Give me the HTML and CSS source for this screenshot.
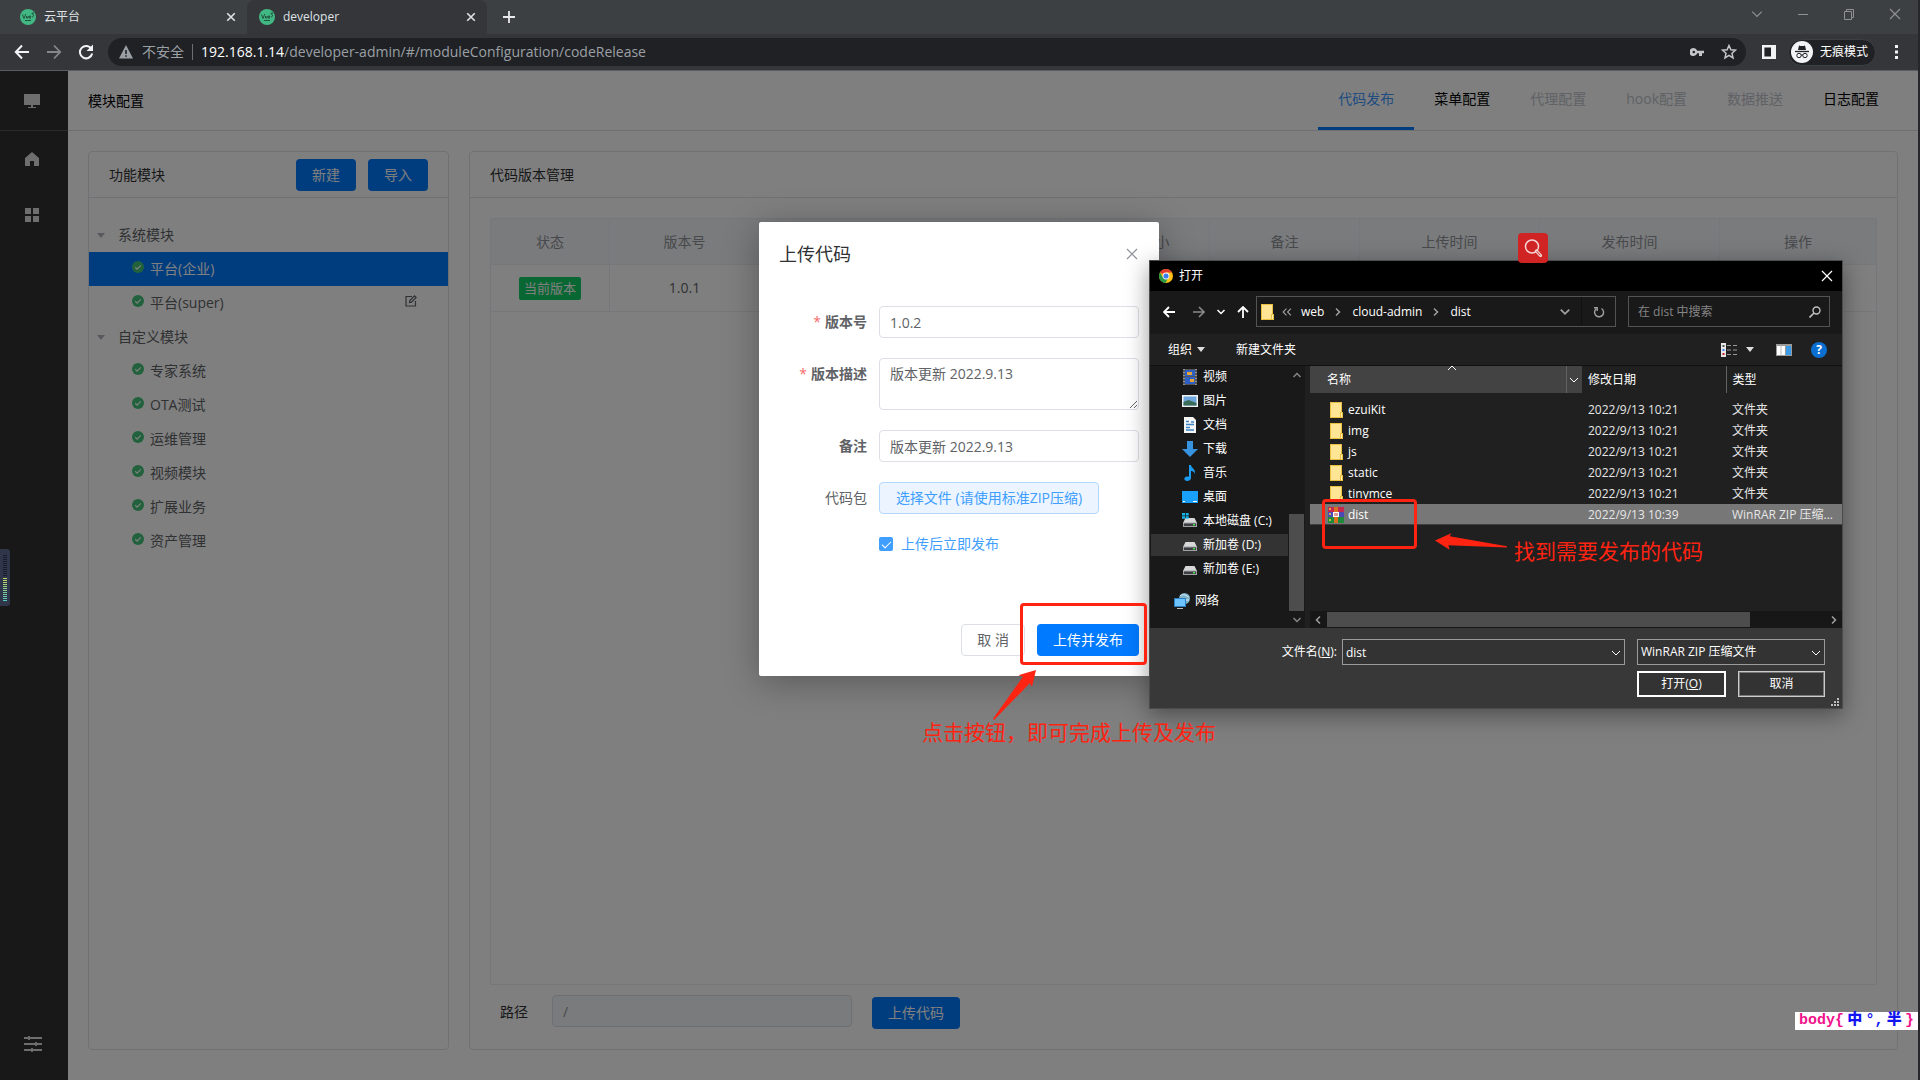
FILE: index.html
```html
<!DOCTYPE html>
<html lang="zh-CN">
<head>
<meta charset="utf-8">
<title>developer</title>
<link rel="stylesheet" href="styles.css">
</head>
<body>
<svg class="defs" aria-hidden="true">
  <symbol id="ok" viewBox="0 0 12 12"><circle cx="6" cy="6" r="6" fill="#42c47a"/><path d="M3.2 6.2l2 1.9 3.6-3.8" fill="none" stroke="#fff" stroke-width="1.2"/></symbol>
  <symbol id="folder" viewBox="0 0 13 16"><path d="M0 0h12v10h1v6H0z" fill="#e9c03f"/><path d="M1 1h10v9h-1v5H1z" fill="#ffe594"/><path d="M11 11h1v4h-1z" fill="#fff0b8"/></symbol>
  <symbol id="vue" viewBox="0 0 16 16"><circle cx="8" cy="8" r="8" fill="#41b883"/><path d="M2.500 5.500l1.500 4 1.800-4.500M6.500 7v2h1.500V7M9 8h2c0-1.600-2-1.600-2 0s1 1.500 2 1M11.500 4.500l2-.8-.8 2c1.500 0 1 2.500-.7 2.200M5 11.500h6" fill="none" stroke="#1f4a38" stroke-width=".9"/></symbol>
  <symbol id="disk" viewBox="0 0 16 16"><path d="M3.500 5h9L15 10H1z" fill="#d6d8da"/><path d="M1 9.500h14V14H1z" fill="#9fa2a5"/><path d="M2 10.500h12V13H2z" fill="#3b3d40"/><path d="M11 11h2v1.500h-2z" fill="#4be04b"/></symbol>
  <symbol id="chev" viewBox="0 0 10 10"><path d="M1.500 3L5 6.500 8.500 3" fill="none" stroke="currentColor" stroke-width="1.500"/></symbol>
  <symbol id="thin" viewBox="0 0 10 10"><path d="M1 3l4 4 4-4" fill="none" stroke="currentColor"/></symbol>
  <symbol id="x" viewBox="0 0 12 12"><path d="M1 1l10 10M11 1L1 11" fill="none" stroke="currentColor" stroke-width="1.200"/></symbol>
  <symbol id="xb" viewBox="0 0 12 12"><path d="M1.500 1.500l9 9M10.500 1.500l-9 9" fill="none" stroke="currentColor" stroke-width="2"/></symbol>
  <symbol id="tri" viewBox="0 0 8 5"><path d="M0 0h8L4 5z" fill="currentColor"/></symbol>
</svg>

<div class="screen">
  <header class="tabstrip">
    <div class="tab"><svg class="i16"><use href="#vue"/></svg><span class="tab-name">云平台</span><button class="bare" aria-label="关闭标签页"><svg class="i9"><use href="#xb"/></svg></button></div>
    <div class="tab tab-on"><svg class="i16"><use href="#vue"/></svg><span class="tab-name">developer</span><button class="bare" aria-label="关闭标签页"><svg class="i9"><use href="#xb"/></svg></button></div>
    <button class="bare new-tab" aria-label="新标签页"><svg class="i12" viewBox="0 0 12 12"><path d="M6 0v12M0 6h12" stroke="#e8eaed" stroke-width="1.800"/></svg></button>
    <div class="win-ctl">
      <button class="bare" aria-label="搜索标签页"><svg class="i12"><use href="#thin"/></svg></button>
      <button class="bare" aria-label="最小化"><svg class="i12" viewBox="0 0 12 12"><path d="M1 6.500h10" stroke="currentColor"/></svg></button>
      <button class="bare" aria-label="还原"><svg class="i12" viewBox="0 0 12 12"><path d="M1.500 3.500h7v8h-7zM3.500 3V1.500h7v8H9" fill="none" stroke="currentColor"/></svg></button>
      <button class="bare" aria-label="关闭"><svg class="i12"><use href="#x"/></svg></button>
    </div>
  </header>
  <div class="toolbar">
    <div class="nav-btns">
      <button class="bare" aria-label="后退"><svg class="i16" viewBox="0 0 16 16"><path d="M15 8H2M8 1.500L1.800 8 8 14.500" fill="none" stroke="#f1f3f4" stroke-width="2"/></svg></button>
      <button class="bare" aria-label="前进"><svg class="i16" viewBox="0 0 16 16"><path d="M1 8h13M8 1.500L14.200 8 8 14.500" fill="none" stroke="#85878a" stroke-width="1.800"/></svg></button>
      <button class="bare" aria-label="重新加载"><svg class="i16" viewBox="0 0 16 16"><path d="M13.500 5A6.200 6.200 0 1 0 14.200 9.500" fill="none" stroke="#f1f3f4" stroke-width="2"/><path d="M15 .5v6.500H8.500z" fill="#f1f3f4"/></svg></button>
    </div>
    <div class="omnibox">
      <svg class="i14" viewBox="0 0 14 14"><path d="M7 0l7 13.500H0z" fill="#9aa0a6"/><path d="M7 5v4M7 10.300v1.500" stroke="#202124" stroke-width="1.600"/></svg>
      <span class="unsafe">不安全</span><span class="sep"></span>
      <span class="url"><b>192.168.1.14</b>/developer-admin/#/moduleConfiguration/codeRelease</span>
      <svg class="i14" viewBox="0 0 14 14"><path d="M3.500 3a4 4 0 1 0 3.700 5.300H9V11h3V8.300h2V5.700H7.200A4 4 0 0 0 3.500 3zm.3 2.700a1.300 1.300 0 1 1 0 2.600 1.300 1.300 0 0 1 0-2.600z" fill="#c4c7ca"/></svg>
      <svg class="i16" viewBox="0 0 16 16"><path d="M8 1.500l1.900 4.300 4.600.4L11 9.300l1 4.600-4-2.500-4 2.500 1-4.600L1.500 6.200l4.600-.4z" fill="none" stroke="#c4c7ca" stroke-width="1.500"/></svg>
    </div>
    <svg class="i14 panel-ico" viewBox="0 0 14 14"><path d="M1.200 1.200h11.600v11.600H1.200z" fill="#202124" stroke="#f1f3f4" stroke-width="2.400"/><path d="M9 0h5v14H9z" fill="#f1f3f4"/></svg>
    <button class="incognito"><svg class="i22" viewBox="0 0 22 22"><circle cx="11" cy="11" r="11" fill="#f1f3f4"/><path d="M7 9l1-4.500 1.500.5h3l1.500-.5L15 9z" fill="#202124"/><path d="M4 10.500h14" stroke="#202124" stroke-width="1.300"/><circle cx="8" cy="14.500" r="2.200" fill="none" stroke="#202124"/><circle cx="14" cy="14.500" r="2.200" fill="none" stroke="#202124"/><path d="M10 14h2" stroke="#202124"/></svg>无痕模式</button>
    <button class="bare more" aria-label="更多"><svg class="i14" viewBox="0 0 14 14"><path d="M6 0h3v3H6zM6 5.500h3v3H6zM6 11h3v3H6z" fill="#f1f3f4"/></svg></button>
  </div>

  <div class="app">
    <nav class="side">
      <a class="side-top" href="#" aria-label="平台"><svg class="i16" viewBox="0 0 16 16"><path d="M0 1h16v11H0zM7 12h2v2h3v1H4v-1h3z" fill="#dcdcdc"/></svg></a>
      <a href="#" aria-label="首页"><svg class="i16" viewBox="0 0 16 16"><path d="M8 1l7 6v8h-5v-5H6v5H1V7z" fill="#dcdcdc"/></svg></a>
      <a href="#" aria-label="模块"><svg class="i16" viewBox="0 0 16 16"><path d="M1 1h6v6H1zM9 1h6v6H9zM1 9h6v6H1zM9 9h6v6H9z" fill="#dcdcdc"/></svg></a>
      <a class="side-end" href="#" aria-label="设置"><svg class="i18" viewBox="0 0 18 18"><path d="M0 3h18M0 9h18M0 15h18M5 1v4M12 7v4M8 13v4" stroke="#dcdcdc" stroke-width="1.800"/></svg></a>
    </nav>
    <div class="page">
      <div class="page-head">
        <h1>模块配置</h1>
        <nav class="menu">
          <a class="on" href="#">代码发布</a><a href="#">菜单配置</a><a class="off" href="#">代理配置</a><a class="off" href="#">hook配置</a><a class="off" href="#">数据推送</a><a href="#">日志配置</a>
        </nav>
      </div>
      <main class="cards">
        <section class="card card-left">
          <div class="card-head"><h2>功能模块</h2><button class="btn primary slim">新建</button><button class="btn primary slim">导入</button></div>
          <ul class="tree">
            <li class="group"><svg class="tri"><use href="#tri"/></svg>系统模块</li>
            <li class="leaf sel"><svg class="i12"><use href="#ok"/></svg>平台(企业)</li>
            <li class="leaf"><svg class="i12"><use href="#ok"/></svg>平台(super)<button class="bare edit" aria-label="编辑"><svg class="i12" viewBox="0 0 12 12"><path d="M7 1.500H1v9.500h9.500V6M4.500 7.500l.4-2L9.500.9l1.700 1.600-4.700 4.600z" fill="none" stroke="#606266" stroke-width="1.200"/></svg></button></li>
            <li class="group"><svg class="tri"><use href="#tri"/></svg>自定义模块</li>
            <li class="leaf"><svg class="i12"><use href="#ok"/></svg>专家系统</li>
            <li class="leaf"><svg class="i12"><use href="#ok"/></svg>OTA测试</li>
            <li class="leaf"><svg class="i12"><use href="#ok"/></svg>运维管理</li>
            <li class="leaf"><svg class="i12"><use href="#ok"/></svg>视频模块</li>
            <li class="leaf"><svg class="i12"><use href="#ok"/></svg>扩展业务</li>
            <li class="leaf"><svg class="i12"><use href="#ok"/></svg>资产管理</li>
          </ul>
        </section>
        <section class="card card-main">
          <div class="card-head"><h2>代码版本管理</h2></div>
          <div class="card-body">
            <div class="table-box">
              <table class="versions">
                <colgroup><col class="w120"><col class="w150"><col class="w300"><col class="w150"><col class="w150"><col class="w180"><col class="w180"><col></colgroup>
                <thead><tr><th>状态</th><th>版本号</th><th>版本描述</th><th>代码包大小</th><th>备注</th><th>上传时间</th><th>发布时间</th><th>操作</th></tr></thead>
                <tbody><tr><td><span class="tag">当前版本</span></td><td>1.0.1</td><td></td><td></td><td></td><td></td><td></td><td></td></tr></tbody>
              </table>
            </div>
            <div class="path-row">
              <label for="path">路径</label><input class="field path" id="path" value="/" disabled><button class="btn primary mid">上传代码</button>
            </div>
          </div>
        </section>
      </main>
    </div>

    <div class="mask">
      <form class="modal">
        <div class="modal-head"><h3>上传代码</h3><button type="button" class="bare" aria-label="关闭"><svg class="i12"><use href="#x"/></svg></button></div>
        <div class="modal-body">
          <label class="req" for="ver">版本号</label><input class="field" id="ver" value="1.0.2">
          <label class="req" for="desc">版本描述</label><textarea class="field" id="desc">版本更新 2022.9.13</textarea>
          <label class="strong" for="note">备注</label><input class="field" id="note" value="版本更新 2022.9.13">
          <label for="pick">代码包</label><button type="button" class="btn plain" id="pick">选择文件 (请使用标准ZIP压缩)</button>
          <div class="tick"><input type="checkbox" id="now" checked><label for="now">上传后立即发布</label></div>
        </div>
        <div class="modal-foot"><button type="button" class="btn cancel">取 消</button><button type="button" class="btn primary">上传并发布</button></div>
      </form>
    </div>
  </div>

  <div class="meter"><span class="bars idle"></span><span class="bars live"></span></div>

  <section class="picker">
    <div class="pk-title">
      <svg class="i14" viewBox="0 0 14 14"><circle cx="7" cy="7" r="7" fill="#fbc116"/><path d="M7 7L1 3.400A7 7 0 0 1 13 3.500H7z" fill="#e33b2e"/><path d="M1 3.400A7 7 0 0 0 6.500 14L9 9 4 8.500z" fill="#279847"/><circle cx="7" cy="7" r="3.400" fill="#fff"/><circle cx="7" cy="7" r="2.600" fill="#3b7ded"/></svg>
      <span>打开</span>
      <button class="bare" aria-label="关闭"><svg class="i12"><use href="#x"/></svg></button>
    </div>
    <div class="pk-nav">
      <div class="pk-arrows">
        <svg class="i12" viewBox="0 0 12 12"><path d="M12 6H1M6 1L1 6l5 5" fill="none" stroke="#fff" stroke-width="1.800"/></svg>
        <svg class="i12" viewBox="0 0 12 12"><path d="M0 6h11M6 1l5 5-5 5" fill="none" stroke="#8a8a8a" stroke-width="1.600"/></svg>
        <svg class="i9"><use href="#chev"/></svg>
        <svg class="i12" viewBox="0 0 12 12"><path d="M6 12V1M1 6l5-5 5 5" fill="none" stroke="#fff" stroke-width="1.800"/></svg>
      </div>
      <div class="addr">
        <svg class="fold"><use href="#folder"/></svg>
        <svg class="i9 dim" viewBox="0 0 9 9"><path d="M4 1.500l-3 3 3 3M8 1.500l-3 3 3 3" fill="none" stroke="currentColor"/></svg>
        <span>web</span><svg class="i9 dim right"><use href="#chev"/></svg><span>cloud-admin</span><svg class="i9 dim right"><use href="#chev"/></svg><span>dist</span>
        <svg class="i12 dim drop"><use href="#chev"/></svg>
        <button class="bare refresh" aria-label="刷新"><svg class="i12" viewBox="0 0 12 12"><path d="M8.500 2.500A4.500 4.500 0 1 1 3 3M1 1.800h3.200V5" fill="none" stroke="#a0a0a0" stroke-width="1.400"/></svg></button>
      </div>
      <div class="find"><input aria-label="搜索" placeholder="在 dist 中搜索"><svg class="i12" viewBox="0 0 12 12"><circle cx="7.500" cy="4.500" r="3.500" fill="none" stroke="#c0c0c0" stroke-width="1.400"/><path d="M5 7L.5 11.500" stroke="#c0c0c0" stroke-width="1.600"/></svg></div>
    </div>
    <div class="pk-tools">
      <button class="bare org">组织<svg class="tri"><use href="#tri"/></svg></button>
      <button class="bare">新建文件夹</button>
      <div class="views">
        <svg class="i16" viewBox="0 0 16 16"><path d="M0 1h5v14H0z" fill="#e8e8e8"/><path d="M1.500 3h2v2h-2z" fill="#555"/><path d="M1.500 7h2v2h-2z" fill="#3b7ded"/><path d="M1.500 11h2v2h-2z" fill="#c22"/><path d="M6 3.500h4M12 3.500h4M6 8h4M12 8h4M6 12.500h4M12 12.500h4" stroke="#999"/></svg>
        <svg class="tri"><use href="#tri"/></svg>
        <svg class="i16 pane" viewBox="0 0 16 16"><path d="M0 2h16v12H0z" fill="#9a9a9a"/><path d="M1 4h8v9H1z" fill="#fff"/><path d="M5 4v9" stroke="#bbb"/><path d="M10 4h5v9h-5z" fill="#3c9be8"/></svg>
        <span class="help">?</span>
      </div>
    </div>
    <div class="pk-body">
      <div class="places">
        <ul>
          <li><svg class="i16" viewBox="0 0 16 16"><path d="M1 0h14v16H1z" fill="#555"/><path d="M3 1h10v6H3zM3 8h10v7H3z" fill="#2d5fc4"/><path d="M5 3h5v3H5zM8 10h4v3H8z" fill="#e8a533"/><path d="M2 0v16M14 0v16" stroke="#ccc" stroke-dasharray="1 2"/></svg>视频</li>
          <li><svg class="i16" viewBox="0 0 16 16"><path d="M0 2h16v12H0z" fill="#f3f3f3"/><path d="M1.500 3.500h13v9h-13z" fill="#6fa8dc"/><path d="M1.500 9l5-2 8 3v2.500h-13z" fill="#3a6b57"/></svg>图片</li>
          <li><svg class="i16" viewBox="0 0 16 16"><path d="M2 0h9l3 3v13H2z" fill="#f5f5f5"/><path d="M4 4.500h3M4 7.500h8M4 10.500h4M4 13h8M9 5h3" stroke="#3a86c8" stroke-width="1.300"/></svg>文档</li>
          <li><svg class="i16" viewBox="0 0 16 16"><path d="M5 0h6v8h5l-8 8-8-8h5z" fill="#3793e0"/></svg>下载</li>
          <li><svg class="i16" viewBox="0 0 16 16"><path d="M7 0h2c0 3 5 4 4 9-1-3-3-3-4-3v7c0 2-2 3-4 3-3 0-4-4 0-4.500 1 0 1.500 0 2 .3z" fill="#1b9df2"/></svg>音乐</li>
          <li><svg class="i16" viewBox="0 0 16 16"><path d="M0 2h16v12H0z" fill="#18a0fb"/><path d="M1 12.500h2M11 12.500h4" stroke="#fff"/></svg>桌面</li>
          <li><svg class="i16" viewBox="0 0 16 16"><use href="#disk"/><path d="M0 0h3v2.500H0zM3.700 0h3v2.500h-3zM0 3.200h3v2.500H0zM3.700 3.200h3v2.500h-3z" fill="#12b5ea"/></svg>本地磁盘 (C:)</li>
          <li class="sel"><svg class="i16"><use href="#disk"/></svg>新加卷 (D:)</li>
          <li><svg class="i16"><use href="#disk"/></svg>新加卷 (E:)</li>
          <li class="net"><svg class="i16" viewBox="0 0 16 16"><circle cx="10.500" cy="5.500" r="5.500" fill="#7fb3c9"/><path d="M6 3c4-3 6 0 9 1M8 7h7" stroke="#d5ecf5" fill="none"/><path d="M0 5h12v9H0z" fill="#2b7fc4"/><path d="M1 6h10v7H1z" fill="#6cc3ff"/><path d="M3 15.500h6" stroke="#bbb"/></svg>网络</li>
        </ul>
        <div class="vbar"><svg class="i9 up"><use href="#chev"/></svg><span></span><svg class="i9"><use href="#chev"/></svg></div>
      </div>
      <div class="files">
        <table>
          <colgroup><col class="c-name"><col class="c-date"><col></colgroup>
          <thead><tr><th class="name-head">名称<svg class="i9 sort"><use href="#thin"/></svg><span class="name-drop"><svg class="i9"><use href="#thin"/></svg></span></th><th class="rule">修改日期</th><th>类型</th></tr></thead>
          <tbody>
            <tr><td><svg class="fold"><use href="#folder"/></svg>ezuiKit</td><td>2022/9/13 10:21</td><td>文件夹</td></tr>
            <tr><td><svg class="fold"><use href="#folder"/></svg>img</td><td>2022/9/13 10:21</td><td>文件夹</td></tr>
            <tr><td><svg class="fold"><use href="#folder"/></svg>js</td><td>2022/9/13 10:21</td><td>文件夹</td></tr>
            <tr><td><svg class="fold"><use href="#folder"/></svg>static</td><td>2022/9/13 10:21</td><td>文件夹</td></tr>
            <tr><td><svg class="fold"><use href="#folder"/></svg>tinymce</td><td>2022/9/13 10:21</td><td>文件夹</td></tr>
            <tr class="sel"><td><svg class="fold rar" viewBox="0 0 16 16"><path d="M0 0h16v5H0z" fill="#c7274f"/><path d="M0 5h16v5H0z" fill="#4a49b5"/><path d="M0 10h16v6H0z" fill="#1f8a3b"/><path d="M1 2h2M1 7h2M1 13h2" stroke="#f4d03f" stroke-width="1.500"/><path d="M6 0h4v16H6z" fill="#d9701f"/><path d="M5 5h6v5H5z" fill="#fff"/><path d="M6.500 6h1v3h-1zM8.500 6h1v3h-1z" fill="#c0392b"/></svg>dist</td><td>2022/9/13 10:39</td><td>WinRAR ZIP 压缩...</td></tr>
          </tbody>
        </table>
        <div class="hbar"><svg class="i9 left"><use href="#chev"/></svg><span></span><svg class="i9 right"><use href="#chev"/></svg></div>
      </div>
    </div>
    <div class="pk-foot">
      <label for="fname">文件名(<u>N</u>):</label>
      <div class="combo"><input id="fname" value="dist"><svg class="i9"><use href="#thin"/></svg></div>
      <div class="combo kind"><select aria-label="文件类型"><option>WinRAR ZIP 压缩文件</option></select><svg class="i9"><use href="#thin"/></svg></div>
      <div class="acts"><button class="open">打开(<u>O</u>)</button><button>取消</button></div>
      <svg class="grip" viewBox="0 0 8 8"><path d="M6 0h2v2H6zM3 3h2v2H3zM6 3h2v2H6zM0 6h2v2H0zM3 6h2v2H3zM6 6h2v2H6z" fill="#bdbdbd"/></svg>
    </div>
  </section>

  <button class="lens" aria-label="搜索"><svg class="i18" viewBox="0 0 18 18"><circle cx="8" cy="7.500" r="6.500" fill="none" stroke="#f5d5d5" stroke-width="1.500"/><path d="M12.500 12l4 4.500" stroke="#f5d5d5" stroke-width="3.200" stroke-linecap="round"/><path d="M13 12.500l3 3.500" stroke="#d02424" stroke-linecap="round"/></svg></button>

  <div class="mark mark-submit"></div>
  <svg class="arrow arrow-submit" viewBox="0 0 129 150"><path d="M0 146L90 20 76 16 129 0 117 50 110 40 3 150z" fill="#ff2312"/></svg>
  <p class="note note-submit">点击按钮，即可完成上传及发布</p>
  <div class="mark mark-file"></div>
  <svg class="arrow arrow-file" viewBox="0 0 216 50"><path d="M0 22L49 0 44 9l172 30v4L40 36l4 14z" fill="#ff2312"/></svg>
  <p class="note note-file">找到需要发布的代码</p>

  <div class="ime"><span>body{</span><b>中</b><b>°,</b><b>半</b><span>}</span></div>
</div>
</body>
</html>
```

FILE: styles.css
```css
* { box-sizing: border-box; }
body { margin: 0; background: #26272a; color: #303133; font: 14px/20px "Open Sans", "Noto Sans CJK SC", sans-serif; }
h1, h2, h3, p, ul { margin: 0; padding: 0; font-size: inherit; font-weight: 400; list-style: none; }
button, input, select, textarea { font: inherit; color: inherit; margin: 0; }
a { color: inherit; text-decoration: none; }
svg { display: block; flex: none; }
.defs { position: absolute; width: 0; height: 0; }
.bare { display: flex; align-items: center; border: 0; background: none; padding: 0; }
.i9 { width: 10px; height: 10px; }
.i12 { width: 12px; height: 12px; }
.i14 { width: 14px; height: 14px; }
.i16 { width: 16px; height: 16px; }
.i18 { width: 18px; height: 18px; }
.i22 { width: 22px; height: 22px; }
.tri { width: 8px; height: 5px; }
.up { transform: rotate(180deg); }
.left { transform: rotate(90deg); }
.right { transform: rotate(-90deg); }
.screen { position: relative; display: flex; flex-direction: column; min-height: 100vh; padding-right: 2px; overflow: hidden; }

/* browser frame */
.tabstrip { display: flex; height: 34px; background: #3c4043; color: #dfe1e5; font-size: 12px; }
.tab { display: flex; align-items: center; gap: 8px; width: 247px; padding: 0 11px 0 20px; }
.tab-on { width: 240px; padding-left: 12px; background: #35363a; border-radius: 8px 8px 0 0; }
.tab-name { flex: 1; }
.new-tab { margin-left: 16px; }
.win-ctl { display: flex; gap: 34px; margin-left: auto; padding: 0 17px 6px 0; color: #8f9194; }
.toolbar { display: flex; align-items: center; height: 37px; background: #35363a; border-bottom: 1px solid #5c5b63; }
.nav-btns { display: flex; gap: 16px; width: 108px; padding-left: 14px; }
.omnibox { display: flex; align-items: center; flex: 1; height: 28px; padding: 0 9px 0 11px; border-radius: 14px; background: #202124; color: #9aa0a6; }
.unsafe { margin-left: 9px; }
.sep { width: 1px; height: 16px; margin: 0 8px; background: #6b6e72; }
.url { flex: 1; }
.url b { font-weight: 400; color: #fff; }
.omnibox .i16 { margin-left: 17px; }
.panel-ico { margin: 0 12px 0 16px; }
.incognito { display: flex; align-items: center; gap: 7px; height: 27px; width: 88px; padding: 0 2px; border: 1px solid #3c4043; border-radius: 14px; background: #202124; color: #fff; font-size: 12px; white-space: nowrap; }
.more { margin: 0 15px 0 13px; }

/* admin application */
.app { position: relative; display: flex; flex: 1; background: #fff; }
.side { display: flex; flex-direction: column; width: 68px; background: #303133; }
.side a { display: flex; align-items: center; height: 56px; padding-left: 24px; }
.side .side-top { height: 60px; border-bottom: 1px solid #55565a; }
.side .side-end { margin-top: auto; margin-bottom: 8px; }
.page { display: flex; flex-direction: column; flex: 1; min-width: 0; }
.page-head { display: flex; align-items: center; justify-content: space-between; height: 60px; padding: 0 19px 0 20px; border-bottom: 1px solid #dcdfe6; color: #000; }
.menu { display: flex; height: 59px; }
.menu a { padding: 18px 20px; border-bottom: 3px solid transparent; }
.menu .on { color: #4098ff; border-color: #007aff; }
.menu .off { color: #c0c4cc; }
.cards { display: flex; flex: 1; gap: 20px; padding: 20px 20px 30px; }
.card { display: flex; flex-direction: column; border: 1px solid #e0e2e8; border-radius: 4px; }
.card-left { width: 361px; }
.card-main { flex: 1; min-width: 0; }
.card-head { display: flex; align-items: center; gap: 12px; height: 46px; padding: 0 20px; border-bottom: 1px solid #e0e2e8; }
.card-head h2 { flex: 1; }
.btn { height: 32px; padding: 0 15px; border: 1px solid transparent; border-radius: 4px; line-height: 20px; white-space: nowrap; }
.primary { background: #007aff; color: #fff; }
.slim { width: 60px; }
.mid { width: 88px; }
.tree { padding-top: 20px; color: #606266; }
.tree li { display: flex; align-items: center; height: 34px; }
.group { gap: 13px; padding-left: 8px; }
.group .tri { color: #b0b3b9; }
.leaf { gap: 6px; padding: 0 31px 0 43px; }
.leaf .i12 { margin-bottom: 4px; }
.tree .sel { background: #007aff; color: #fff; }
.edit { margin-left: auto; }
.card-body { display: flex; flex-direction: column; flex: 1; padding: 20px; }
.table-box { flex: 1; border: 1px solid #ebeef5; }
.versions { width: 100%; table-layout: fixed; border-collapse: separate; border-spacing: 0; color: #606266; text-align: center; }
.versions th { height: 46px; padding: 0; background: #f5f7fa; color: #909399; font-weight: 400; }
.versions td { height: 47px; padding: 0; }
.versions th, .versions td { border-right: 1px solid #ebeef5; border-bottom: 1px solid #ebeef5; }
.versions th:last-child, .versions td:last-child { border-right: 0; }
.w120 { width: 119px; }
.w150 { width: 150px; }
.w180 { width: 180px; }
.w300 { width: 300px; }
.tag { display: inline-block; width: 62px; border-radius: 2px; background: #13ce66; color: #fff; font-size: 13px; line-height: 23px; }
.path-row { display: flex; align-items: flex-end; height: 34px; margin-top: 10px; padding-left: 10px; }
.path-row label { width: 52px; align-self: center; }
.field { width: 100%; height: 32px; padding: 0 10px; border: 1px solid #dcdfe6; border-radius: 4px; background: #fff; color: #606266; }
.path { width: 300px; margin-right: 20px; align-self: flex-start; background: #f5f7fa; color: #909399; }

/* upload dialog */
.mask { position: absolute; inset: 0; display: flex; justify-content: center; align-items: flex-start; padding-top: 151px; background: rgba(0, 0, 0, .5); }
.modal { width: 400px; padding: 20px; border-radius: 2px; background: #fff; box-shadow: 0 6px 36px rgba(0, 0, 0, .3); }
.modal-head { display: flex; align-items: center; justify-content: space-between; height: 24px; padding-right: 1px; color: #909399; }
.modal-head h3 { font-size: 18px; line-height: 24px; color: #303133; }
.modal-body { display: grid; grid-template-columns: 88px 260px; column-gap: 12px; row-gap: 20px; padding-top: 40px; color: #606266; }
.modal-body > label { line-height: 32px; text-align: right; }
.req, .strong { font-weight: 700; }
.req::before { content: "*"; margin-right: 4px; color: #f56c6c; font-weight: 400; }
textarea.field { display: block; height: 52px; padding: 5px 10px; resize: vertical; }
.plain { justify-self: start; width: 220px; padding: 0; border-color: #b3d8ff; background: #ecf5ff; color: #409eff; }
.tick { grid-column: 2; display: flex; align-items: center; gap: 8px; height: 20px; color: #409eff; }
.tick input { appearance: none; width: 14px; height: 14px; border-radius: 2px; background: #409eff; display: grid; place-items: center; }
.tick input::after { content: ""; width: 4px; height: 8px; margin-bottom: 2px; border: solid #fff; border-width: 0 1px 1px 0; transform: rotate(45deg); }
.modal-foot { display: flex; justify-content: flex-end; gap: 12px; padding-top: 70px; }
.cancel { background: #fff; border-color: #dcdfe6; color: #606266; }

/* volume meter docked to the screen edge */
.meter { position: absolute; left: 0; top: 549px; width: 10px; height: 57px; padding: 6px 3px; border-radius: 0 3px 3px 0; background: #30364a; }
.bars { display: block; }
.idle { height: 22px; background: repeating-linear-gradient(#191d2b 0 1px, #30364a 1px 2px); }
.live { height: 24px; width: 4px; margin-top: 1px; background: repeating-linear-gradient(transparent 0 1px, #30364a 1px 2px), linear-gradient(#c8d860, #50c8c0); }

/* system file picker */
.picker { position: absolute; left: 1149px; top: 260px; width: 694px; border: 1px solid #4c4c4c; background: #191919; color: #fff; font-size: 12px; line-height: 16px; box-shadow: 0 6px 22px rgba(0, 0, 0, .4); }
.pk-title { display: flex; align-items: center; gap: 6px; height: 30px; padding: 0 9px 0 9px; background: #000; }
.pk-title button { margin-left: auto; }
.pk-nav { display: flex; height: 43px; padding: 5px 12px 0 13px; }
.pk-arrows { display: flex; align-items: center; gap: 14px; width: 93px; height: 31px; }
.pk-arrows .i12:first-child { margin-right: 4px; }
.pk-arrows .i9 { margin: 0 -3px; }
.addr { display: flex; align-items: center; gap: 8px; width: 360px; height: 31px; margin-right: 12px; padding-left: 4px; border: 1px solid #535353; }
.addr span { margin: 0 1px; }
.dim { color: #a0a0a0; }
.fold { width: 13px; height: 16px; }
.drop { margin-left: auto; margin-right: 2px; }
.refresh { justify-content: center; width: 34px; height: 29px; border-left: 1px solid #111; }
.find { display: flex; align-items: center; flex: 1; height: 31px; padding: 0 8px; border: 1px solid #535353; }
.find input { flex: 1; min-width: 0; border: 0; padding: 0 1px; background: none; }
.find input::placeholder { color: #858585; }
.pk-tools { display: flex; align-items: center; gap: 31px; height: 31px; padding: 0 15px 0 18px; background: #202020; }
.org { gap: 5px; }
.pk-tools .tri { color: #ddd; }
.views { display: flex; align-items: center; gap: 9px; margin-left: auto; }
.pane { margin: 0 10px 0 13px; }
.help { width: 16px; border-radius: 8px; background: #0a6fd0; font-weight: 700; text-align: center; }
.pk-body { display: flex; height: 263px; border-top: 1px solid #111; }
.places { display: flex; width: 160px; border-right: 5px solid #202020; overflow: hidden; }
.places ul { flex: 1; padding-left: 1px; }
.places li { display: flex; align-items: center; gap: 5px; height: 22px; margin-bottom: 2px; padding-left: 31px; white-space: nowrap; }
.places .sel { background: #333; }
.places .net { margin-top: 10px; padding-left: 23px; }
.vbar { display: flex; flex-direction: column; align-items: center; width: 17px; padding: 4px 1px 3px; color: #858585; }
.vbar span { width: 15px; height: 97px; margin-top: auto; margin-bottom: 4px; background: #4d4d4d; }
.files { display: flex; flex-direction: column; flex: 1; min-width: 0; background: #202020; }
.files table { width: 100%; table-layout: fixed; border-collapse: collapse; }
.c-name { width: 272px; }
.c-date { width: 144px; }
.files th { height: 27px; padding: 0 6px; font-weight: 400; text-align: left; }
.files .name-head { position: relative; padding-left: 17px; background: #434343; }
.files .rule { border-right: 1px solid #636363; }
.sort { position: absolute; left: 137px; top: -3px; transform: rotate(180deg); }
.name-drop { position: absolute; right: 0; top: 0; display: flex; align-items: center; width: 16px; height: 27px; padding-left: 2px; border-left: 1px solid #636363; }
.files td { height: 21px; padding: 0 6px; color: #e6e6e6; white-space: nowrap; }
.files td:first-child { padding-left: 20px; color: #fff; }
.files tbody::before { content: ""; display: block; height: 6px; }
.files td .fold { display: inline-block; margin-right: 5px; vertical-align: -4px; }
.files td .rar { width: 16px; margin: 0 4px 0 -2px; }
.files .sel { background: #777; box-shadow: inset 0 -1px #404040; }
.hbar { display: flex; align-items: center; height: 17px; margin-top: auto; padding: 0 3px; gap: 4px; background: #171717; color: #a0a0a0; }
.hbar span { width: 423px; height: 15px; background: #4d4d4d; }
.hbar .right { margin-left: auto; }
.pk-foot { position: relative; display: grid; grid-template-columns: 192px 283px 12px 188px; align-content: start; row-gap: 6px; height: 80px; padding-top: 11px; background: #383838; }
.pk-foot label { padding-right: 5px; line-height: 26px; text-align: right; }
.combo { position: relative; }
.kind, .acts { grid-column: 4; }
.combo input, .combo select { display: block; width: 100%; height: 26px; padding: 0 3px; border: 1px solid #9b9b9b; border-radius: 0; appearance: none; background: #333; color: #fff; }
.combo svg { position: absolute; right: 4px; top: 9px; }
.acts { display: flex; gap: 12px; }
.acts button { flex: 1; height: 26px; padding: 0; border: 1px solid #ccc; outline: 1px solid #777; outline-offset: -2px; background: #333; color: #fff; }
.acts .open { border: 2px solid #fff; outline: 0; }
.grip { position: absolute; right: 3px; bottom: 2px; width: 8px; height: 8px; }

/* floating search button and annotations drawn on the screen */
.lens { position: absolute; left: 1518px; top: 233px; width: 30px; height: 30px; padding: 6px; border: 0; border-radius: 4px; background: #d02424; }
.mark { position: absolute; border: 3px solid #ff2312; border-radius: 4px; }
.mark-submit { left: 1020px; top: 603px; width: 127px; height: 62px; }
.mark-file { left: 1322px; top: 499px; width: 95px; height: 50px; }
.arrow { position: absolute; }
.arrow-submit { left: 993px; top: 670px; width: 43px; height: 50px; }
.arrow-file { left: 1435px; top: 533px; width: 72px; height: 17px; }
.note { position: absolute; color: #ff2312; font-size: 21px; line-height: 28px; white-space: nowrap; }
.note-submit { left: 922px; top: 718px; }
.note-file { left: 1514px; top: 537px; }
.ime { position: absolute; right: 2px; bottom: 50px; display: flex; align-items: center; justify-content: space-between; width: 123px; height: 18px; padding: 0 4px; background: #fff; color: #f0148c; font: 700 15px/18px "Liberation Mono", "Noto Sans CJK SC", monospace; }
.ime b { color: #1414f0; }
```
